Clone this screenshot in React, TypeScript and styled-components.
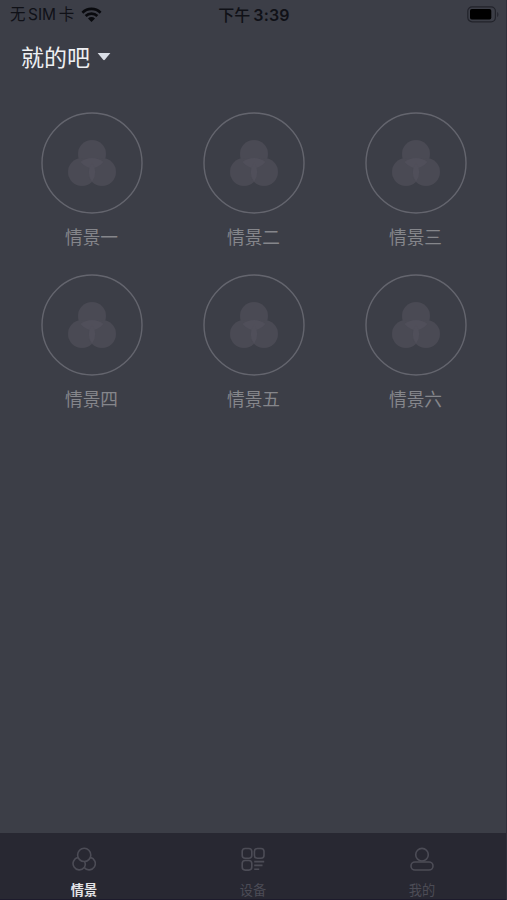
import React from "react";
import styled, { createGlobalStyle } from "styled-components";

const GlobalStyle = createGlobalStyle`
  * { box-sizing: border-box; }
  body {
    margin: 0;
    background: #3c3e47;
    font-family: "Inter", "Noto Sans CJK SC", sans-serif;
  }
`;

const Screen = styled.div`
  display: flex;
  flex-direction: column;
  width: 507px;
  height: 900px;
  overflow: hidden;
  background: #3c3e47;
  border-right: 1px solid #302f3b;
`;

const StatusBar = styled.header`
  display: grid;
  grid-template-columns: 1fr auto 1fr;
  align-items: center;
  height: 30px;
  padding: 0 7px 0 10px;
  color: #101117;
  font-size: 15.5px;
  line-height: 30px;
`;

const Carrier = styled.div`
  display: flex;
  align-items: center;
  gap: 2.5px;
  height: 30px;
  white-space: nowrap;

  svg { margin: -2px 0 0 4.5px; }
`;

const Clock = styled.div`
  display: flex;
  gap: 3px;
  height: 30px;
  margin-left: -1px;
  font-size: 16px;
  font-weight: 500;
  white-space: nowrap;

  b { font-weight: 600; letter-spacing: 0.2px; }
`;

const BatterySlot = styled.div`
  display: flex;
  justify-content: flex-end;
  padding-bottom: 1px;
`;

const HomePicker = styled.div`
  display: flex;
  align-items: center;
  gap: 7px;
  height: 53px;
  padding-left: 21px;
  color: #eeeff2;
  font-size: 23px;
  line-height: 53px;

  span { padding-top: 3px; }
`;

const SceneGrid = styled.main`
  display: grid;
  grid-template-columns: repeat(3, 162px);
  grid-auto-rows: 162px;
  flex: 1;
  align-content: start;
  padding: 29px 0 0 11px;
`;

const Scene = styled.div`
  display: flex;
  flex-direction: column;
  align-items: center;
`;

const SceneCircle = styled.div`
  display: flex;
  align-items: center;
  justify-content: center;
  width: 102px;
  height: 102px;
`;

const SceneName = styled.div`
  margin-top: 11px;
  padding-right: 1px;
  color: #85868b;
  font-size: 17.7px;
  line-height: 26px;
`;

const TabBar = styled.nav`
  display: grid;
  grid-template-columns: repeat(3, 169px);
  height: 67px;
  background: #282832;
  border-bottom: 1px solid #1d1b2c;
`;

const Tab = styled.div<{ $active?: boolean }>`
  display: flex;
  flex-direction: column;
  align-items: center;
  padding: 14px 1px 0 0;
  color: ${(p) => (p.$active ? "#e4e4e7" : "#4c4c56")};
  font-size: 13.2px;
  font-weight: ${(p) => (p.$active ? 700 : 400)};
  line-height: 20px;

  svg { margin-bottom: 9px; }
`;

const WifiIcon = () => (
  <svg width="21" height="15" viewBox="0 0 21 15" fill="#090a0e">
    <path d="M.5 4.7a14.2 14.2 0 0 1 20 0L18.7 6.7a11.6 11.6 0 0 0-16.4 0z" />
    <path d="M3.7 8.1a9.7 9.7 0 0 1 13.6 0l-1.9 2a7 7 0 0 0-9.8 0z" />
    <path d="M7 11.5a5 5 0 0 1 7 0L10.5 15z" />
  </svg>
);

const BatteryIcon = () => (
  <svg width="32" height="17" viewBox="0 0 32 17">
    <rect x="0.8" y="0.8" width="27.6" height="15" rx="4.3" fill="none" stroke="#22232b" strokeWidth="1.2" />
    <rect x="3" y="3" width="21.3" height="10.6" rx="1.8" fill="#000" />
    <path d="M30 6v5c2-.7 2-4.3 0-5z" fill="#282932" />
  </svg>
);

const CaretIcon = () => (
  <svg width="14" height="8" viewBox="0 0 14 8">
    <path d="M.6 0h12.8L7.8 6.8q-.8.8-1.6 0z" fill="#d9dde6" />
  </svg>
);

const SceneIcon = () => (
  <svg width="102" height="102" viewBox="0 0 102 102" fill="#4a4a54">
    <circle cx="51" cy="51" r="50" fill="none" stroke="#64656e" strokeWidth="1.4" />
    <circle cx="51" cy="42" r="14" />
    <circle cx="41" cy="60" r="14" />
    <circle cx="61" cy="60" r="14" />
    <path d="M39.5 50Q51 62 62.5 50Q51 42 39.5 50z" fill="#504f5a" />
    <path d="M51 50.2Q44.5 60 51 69.8Q57.5 60 51 50.2z" fill="#504f5a" />
  </svg>
);

const lineIcon = {
  width: 24,
  height: 24,
  viewBox: "0 0 24 24",
  fill: "none",
  stroke: "#4c4c56",
  strokeWidth: 1.6,
};

const ScenesTabIcon = () => (
  <svg {...lineIcon}>
    <circle cx="12.2" cy="7.9" r="6.6" />
    <path d="M6 10.4A6.3 6.3 0 1 0 12.2 20.6Q14.3 17.5 12.4 14.4" />
    <path d="M18.4 10.4A6.3 6.3 0 1 1 12.2 20.6" />
  </svg>
);

const DevicesTabIcon = () => (
  <svg {...lineIcon}>
    <rect x="1.2" y="1.5" width="9.6" height="9.8" rx="3" />
    <rect x="13.4" y="1.5" width="9.6" height="9.8" rx="3" />
    <rect x="1.2" y="13.5" width="9.6" height="9.6" rx="3" />
    <path d="M13.2 14.6h10M13.2 18.4h8.3M13.2 22.2h5" />
  </svg>
);

const ProfileTabIcon = () => (
  <svg {...lineIcon}>
    <circle cx="12" cy="7.7" r="6.3" />
    <rect x="1" y="15" width="22" height="8" rx="4" />
  </svg>
);

const scenes = ["情景一", "情景二", "情景三", "情景四", "情景五", "情景六"];

export default function App() {
  return (
    <>
      <GlobalStyle />
      <Screen>
        <StatusBar>
          <Carrier>
            <span>无</span>
            <span>SIM</span>
            <span>卡</span>
            <WifiIcon />
          </Carrier>
          <Clock>
            <span>下午</span>
            <b>3:39</b>
          </Clock>
          <BatterySlot>
            <BatteryIcon />
          </BatterySlot>
        </StatusBar>
        <HomePicker>
          <span>就的吧</span>
          <CaretIcon />
        </HomePicker>
        <SceneGrid>
          {scenes.map((name) => (
            <Scene key={name}>
              <SceneCircle>
                <SceneIcon />
              </SceneCircle>
              <SceneName>{name}</SceneName>
            </Scene>
          ))}
        </SceneGrid>
        <TabBar>
          <Tab $active>
            <ScenesTabIcon />
            情景
          </Tab>
          <Tab>
            <DevicesTabIcon />
            设备
          </Tab>
          <Tab>
            <ProfileTabIcon />
            我的
          </Tab>
        </TabBar>
      </Screen>
    </>
  );
}
